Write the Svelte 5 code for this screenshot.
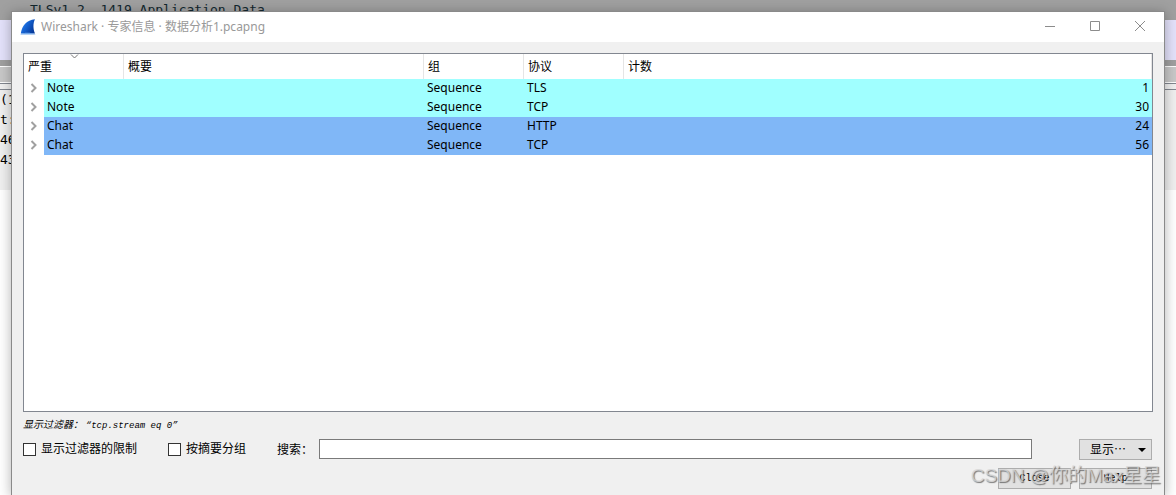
<script lang="ts">
  type Row = { severity: string; summary: string; group: string; protocol: string; count: number };

  const rows: Row[] = [
    { severity: 'Note', summary: '', group: 'Sequence', protocol: 'TLS', count: 1 },
    { severity: 'Note', summary: '', group: 'Sequence', protocol: 'TCP', count: 30 },
    { severity: 'Chat', summary: '', group: 'Sequence', protocol: 'HTTP', count: 24 },
    { severity: 'Chat', summary: '', group: 'Sequence', protocol: 'TCP', count: 56 }
  ];
  const details = ['(1', 't:', '46', '43'];

  let limitToFilter = $state(false);
  let groupBySummary = $state(false);
  let search = $state('');
</script>

<div class="screen">
  <!-- main window, mostly hidden by the dialog -->
  <div class="backdrop">
    <div class="packet">TLSv1.2&nbsp; 1419 Application Data</div>
    <div class="packet-next"></div>
    <div class="packet-end"></div>
    <div class="splitter"></div>
    <div class="pane-gap"></div>
    <div class="details">
      {#each details as line}
        <div>{line}</div>
      {/each}
    </div>
  </div>

  <div class="dialog" role="dialog" aria-labelledby="title">
    <header class="titlebar">
      <svg class="logo" width="16" height="16" viewBox="0 0 16 16" aria-hidden="true">
        <defs>
          <linearGradient id="fin" x1="0" y1="0" x2="1" y2="0.6">
            <stop offset="0" stop-color="#4b9bf5" />
            <stop offset="0.45" stop-color="#1767d8" />
            <stop offset="1" stop-color="#063a9c" />
          </linearGradient>
        </defs>
        <path d="M0.8 14.5C2 6.8 6.5 1 15 0.3C12.9 4.2 13 10 15 14.5Z" fill="url(#fin)" />
        <path d="M0 15.5C4 13 10.5 13 15.8 15.5Z" fill="#6ea6ea" />
      </svg>
      <h1 id="title">Wireshark · 专家信息 · 数据分析1.pcapng</h1>
      <button class="window-button" aria-label="Minimize">
        <svg width="12" height="12" viewBox="0 0 12 12"><path d="M1 6.5H11" /></svg>
      </button>
      <button class="window-button" aria-label="Maximize">
        <svg width="12" height="12" viewBox="0 0 12 12"><path d="M1.5 1.5H10.5V10.5H1.5Z" /></svg>
      </button>
      <button class="window-button" aria-label="Close window">
        <svg width="12" height="12" viewBox="0 0 12 12"><path d="M1 1L11 11M11 1L1 11" /></svg>
      </button>
    </header>

    <div class="body">
      <div class="tree">
        <table>
          <colgroup>
            <col class="col-severity" />
            <col class="col-summary" />
            <col class="col-narrow" />
            <col class="col-narrow" />
            <col />
          </colgroup>
          <thead>
            <tr>
              <th class="sorted">
                <svg width="9" height="5" viewBox="0 0 9 5" aria-hidden="true"><path d="M1 0.5L4.5 4L8 0.5" /></svg>
                严重
              </th>
              <th>概要</th>
              <th>组</th>
              <th>协议</th>
              <th>计数</th>
            </tr>
          </thead>
          <tbody>
            {#each rows as row}
              <tr class={row.severity.toLowerCase()}>
                <td class="severity">
                  <div class="branch">
                    <button class="expander" aria-label="Expand">
                      <svg width="8" height="10" viewBox="0 0 8 10"><path d="M1.5 1L5.5 5L1.5 9" /></svg>
                    </button>
                    <span>{row.severity}</span>
                  </div>
                </td>
                <td>{row.summary}</td>
                <td>{row.group}</td>
                <td>{row.protocol}</td>
                <td class="count">{row.count}</td>
              </tr>
            {/each}
          </tbody>
        </table>
      </div>

      <p class="hint">显示过滤器： <span>“tcp.stream eq 0”</span></p>

      <div class="controls">
        <label class="check"><input type="checkbox" bind:checked={limitToFilter} />显示过滤器的限制</label>
        <label class="check"><input type="checkbox" bind:checked={groupBySummary} />按摘要分组</label>
        <label class="search-label" for="search">搜索：</label>
        <input id="search" class="search" type="text" bind:value={search} />
        <button class="push show">
          显示⋯
          <svg width="8" height="4" viewBox="0 0 8 4" aria-hidden="true"><path d="M0 0H8L4 4Z" /></svg>
        </button>
      </div>

      <footer class="actions">
        <button class="push">Close</button>
        <button class="push">Help</button>
        <span class="watermark">CSDN @你的Max星星</span>
      </footer>
    </div>
  </div>
</div>

<style>
  :global(body) { margin: 0; background: #ffffff; }
  * { box-sizing: border-box; }
  .screen {
    position: relative;
    min-height: 100vh;
    padding: 11px 11px 0;
    display: flex;
    overflow: hidden;
    color: #000000;
    font: 12px/16px "Liberation Sans", "Noto Sans CJK SC", sans-serif;
  }

  .backdrop { position: absolute; inset: 0; font: 13px/20px "DejaVu Sans Mono", monospace; }
  .packet { height: 20px; padding-left: 30px; background: #a0a0a0; color: #12272e; white-space: pre; }
  .packet-next { height: 40px; background: #e4e2fb; }
  .packet-end { height: 6px; background: #a0a0a0; }
  .splitter { height: 17px; background: #c8c8c8; border-top: 1px solid #ffffff; border-bottom: 1px solid #ffffff; }
  .pane-gap { height: 7px; background: #f0f0f0; border-top: 1px solid #828790; border-bottom: 1px solid #828790; }
  .details { height: 100px; background: #f0f0f0; }

  .dialog {
    position: relative;
    flex: 1;
    min-width: 0;
    display: flex;
    flex-direction: column;
    border: 1px solid #8a8a8a;
    border-bottom: none;
    background: #f0f0f0;
    box-shadow: 0 2px 12px rgba(0, 0, 0, 0.3);
  }
  .titlebar { display: flex; align-items: center; height: 30px; padding: 0 2px 0 8px; background: #ffffff; }
  .logo { flex-shrink: 0; }
  h1 {
    flex: 1; margin: 0 0 0 5px; color: #999999;
    font: 12px/16px "Noto Sans", "Noto Sans CJK SC", sans-serif;
  }
  .window-button {
    width: 45px; height: 30px; padding: 0 0 2px; border: none; background: none;
    display: flex; align-items: center; justify-content: center;
  }
  .window-button path { fill: none; stroke: #8c8c8c; }

  .body { flex: 1; display: flex; flex-direction: column; padding: 11px 11px 6px; }
  .tree { flex: 1; border: 1px solid #828790; background: #ffffff; }
  table { width: 100%; table-layout: fixed; border-collapse: separate; border-spacing: 0; }
  .col-severity { width: 100px; }
  .col-summary { width: 300px; }
  .col-narrow { width: 100px; }
  th {
    position: relative; height: 25px; padding: 0 4px; text-align: left;
    font-weight: 400; border-right: 1px solid #e5e5e5;
  }
  .sorted svg { position: absolute; top: 0; left: 46px; }
  .sorted path { fill: none; stroke: #777777; }
  td {
    height: 19px; padding: 0 3px 2px; white-space: nowrap;
    font: 12px/17px "Noto Sans", "Noto Sans CJK SC", sans-serif;
  }
  .note td, .note span { background: #a0ffff; }
  .chat td, .chat span { background: #80b7f7; }
  td.severity { padding: 0; background: #ffffff; }
  .branch { display: flex; height: 19px; }
  .branch span { flex: 1; padding-left: 3px; }
  .expander {
    width: 20px; padding: 0 0 1px; border: none; background: none;
    display: flex; align-items: center; justify-content: center;
  }
  .expander path { fill: none; stroke: #a0a0a0; stroke-width: 2; }
  .count { text-align: right; }

  .hint { margin: 5px 0; font-size: 10px; line-height: 16px; font-style: italic; }
  .hint span { font-family: "Liberation Mono", monospace; font-size: 9px; }
  .controls { display: flex; align-items: flex-start; height: 21px; padding-right: 1px; line-height: 20px; }
  .check { display: flex; align-items: center; gap: 5px; margin-right: 31px; white-space: nowrap; }
  .check input {
    appearance: none; width: 13px; height: 13px; margin: 0;
    border: 1px solid #333333; background: #ffffff;
  }
  .check input:checked { box-shadow: inset 0 0 0 2px #ffffff; background: #333333; }
  .search-label { margin-right: 6px; white-space: nowrap; line-height: 22px; }
  .search {
    flex: 1; min-width: 0; height: 20px; padding: 0 4px; margin-right: 47px;
    border: 1px solid #7a7a7a; background: #ffffff; font: inherit;
  }
  .push {
    width: 73px; height: 21px; padding: 0; border: 1px solid #adadad;
    background: #e1e1e1; color: #000000; font: 10px/16px "Liberation Mono", monospace;
  }
  .show {
    display: flex; align-items: center; justify-content: space-between;
    padding: 0 5px 0 10px; font: inherit;
  }
  .actions {
    position: relative; display: flex; justify-content: flex-end;
    gap: 8px; margin-top: 8px; padding-right: 1px;
  }
  .watermark {
    position: absolute; right: -8px; top: -4px; white-space: nowrap; pointer-events: none;
    font: 19px/24px "Liberation Sans", "Noto Sans CJK SC", sans-serif;
    color: rgba(215, 215, 215, 0.75); text-shadow: 1px 1px 1px rgba(70, 70, 70, 0.7);
  }
</style>
